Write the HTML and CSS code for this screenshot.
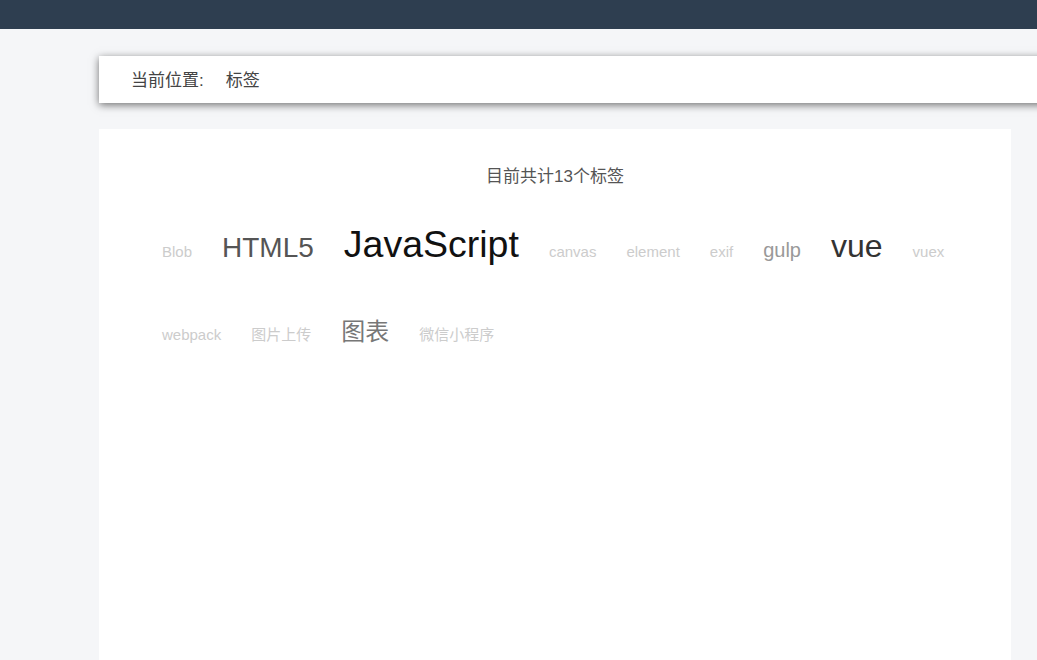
FILE: index.html
```html
<!DOCTYPE html>
<html lang="zh-CN">
<head>
<meta charset="utf-8">
<title>标签</title>
<link rel="stylesheet" href="styles.css">
</head>
<body>
<header class="topbar"></header>
<main class="main">
  <div class="crumb">
    <span class="crumb-label">当前位置:</span>
    <span class="crumb-current">标签</span>
  </div>
  <section class="card">
    <h2 class="title">目前共计13个标签</h2>
    <div class="tags">
      <a class="tag s1">Blob</a>
      <a class="tag s4">HTML5</a>
      <a class="tag s6">JavaScript</a>
      <a class="tag s1">canvas</a>
      <a class="tag s1">element</a>
      <a class="tag s1">exif</a>
      <a class="tag s2">gulp</a>
      <a class="tag s5">vue</a>
      <a class="tag s1">vuex</a>
      <a class="tag s1">webpack</a>
      <a class="tag s1">图片上传</a>
      <a class="tag s3">图表</a>
      <a class="tag s1">微信小程序</a>
    </div>
  </section>
</main>
</body>
</html>
```
FILE: styles.css
```css
* { box-sizing: border-box; }
html, body { margin: 0; padding: 0; }
body {
  background: #f5f6f8;
  font-family: "Liberation Sans", Arial, "Noto Sans CJK SC", sans-serif;
  color: #333;
  overflow: hidden;
  height: 660px;
}
.topbar {
  height: 29px;
  background: #2e3e50;
}
.main {
  padding: 27px 0 0 99px;
}
.crumb {
  height: 47px;
  margin-right: -40px;
  background: #fff;
  box-shadow: 0 2px 8px rgba(0, 0, 0, 0.55);
  display: flex;
  align-items: center;
  padding: 0 0 3px 32px;
  font-size: 17px;
  color: #444;
}
.crumb-current { margin-left: 22px; }
.card {
  margin-top: 26px;
  width: 912px;
  height: 531px;
  background: #fff;
  padding: 36px 48px 0 48px;
}
.title {
  margin: 0;
  text-align: center;
  font-size: 17px;
  font-weight: normal;
  color: #555;
  line-height: 24px;
}
.tags {
  margin-top: 33px;
  display: flex;
  flex-wrap: wrap;
  align-items: baseline;
  row-gap: 51px;
  padding: 0 15px;
  column-gap: 30px;
}
.tag {
  line-height: 1.2;
  white-space: nowrap;
}
.s1 { font-size: 15px; color: #ccc; }
.s2 { font-size: 20px; color: #999; }
.s3 { font-size: 24px; color: #777; }
.s4 { font-size: 28px; color: #555; }
.s5 { font-size: 32px; color: #333; }
.s6 { font-size: 37.5px; color: #111; }
```
